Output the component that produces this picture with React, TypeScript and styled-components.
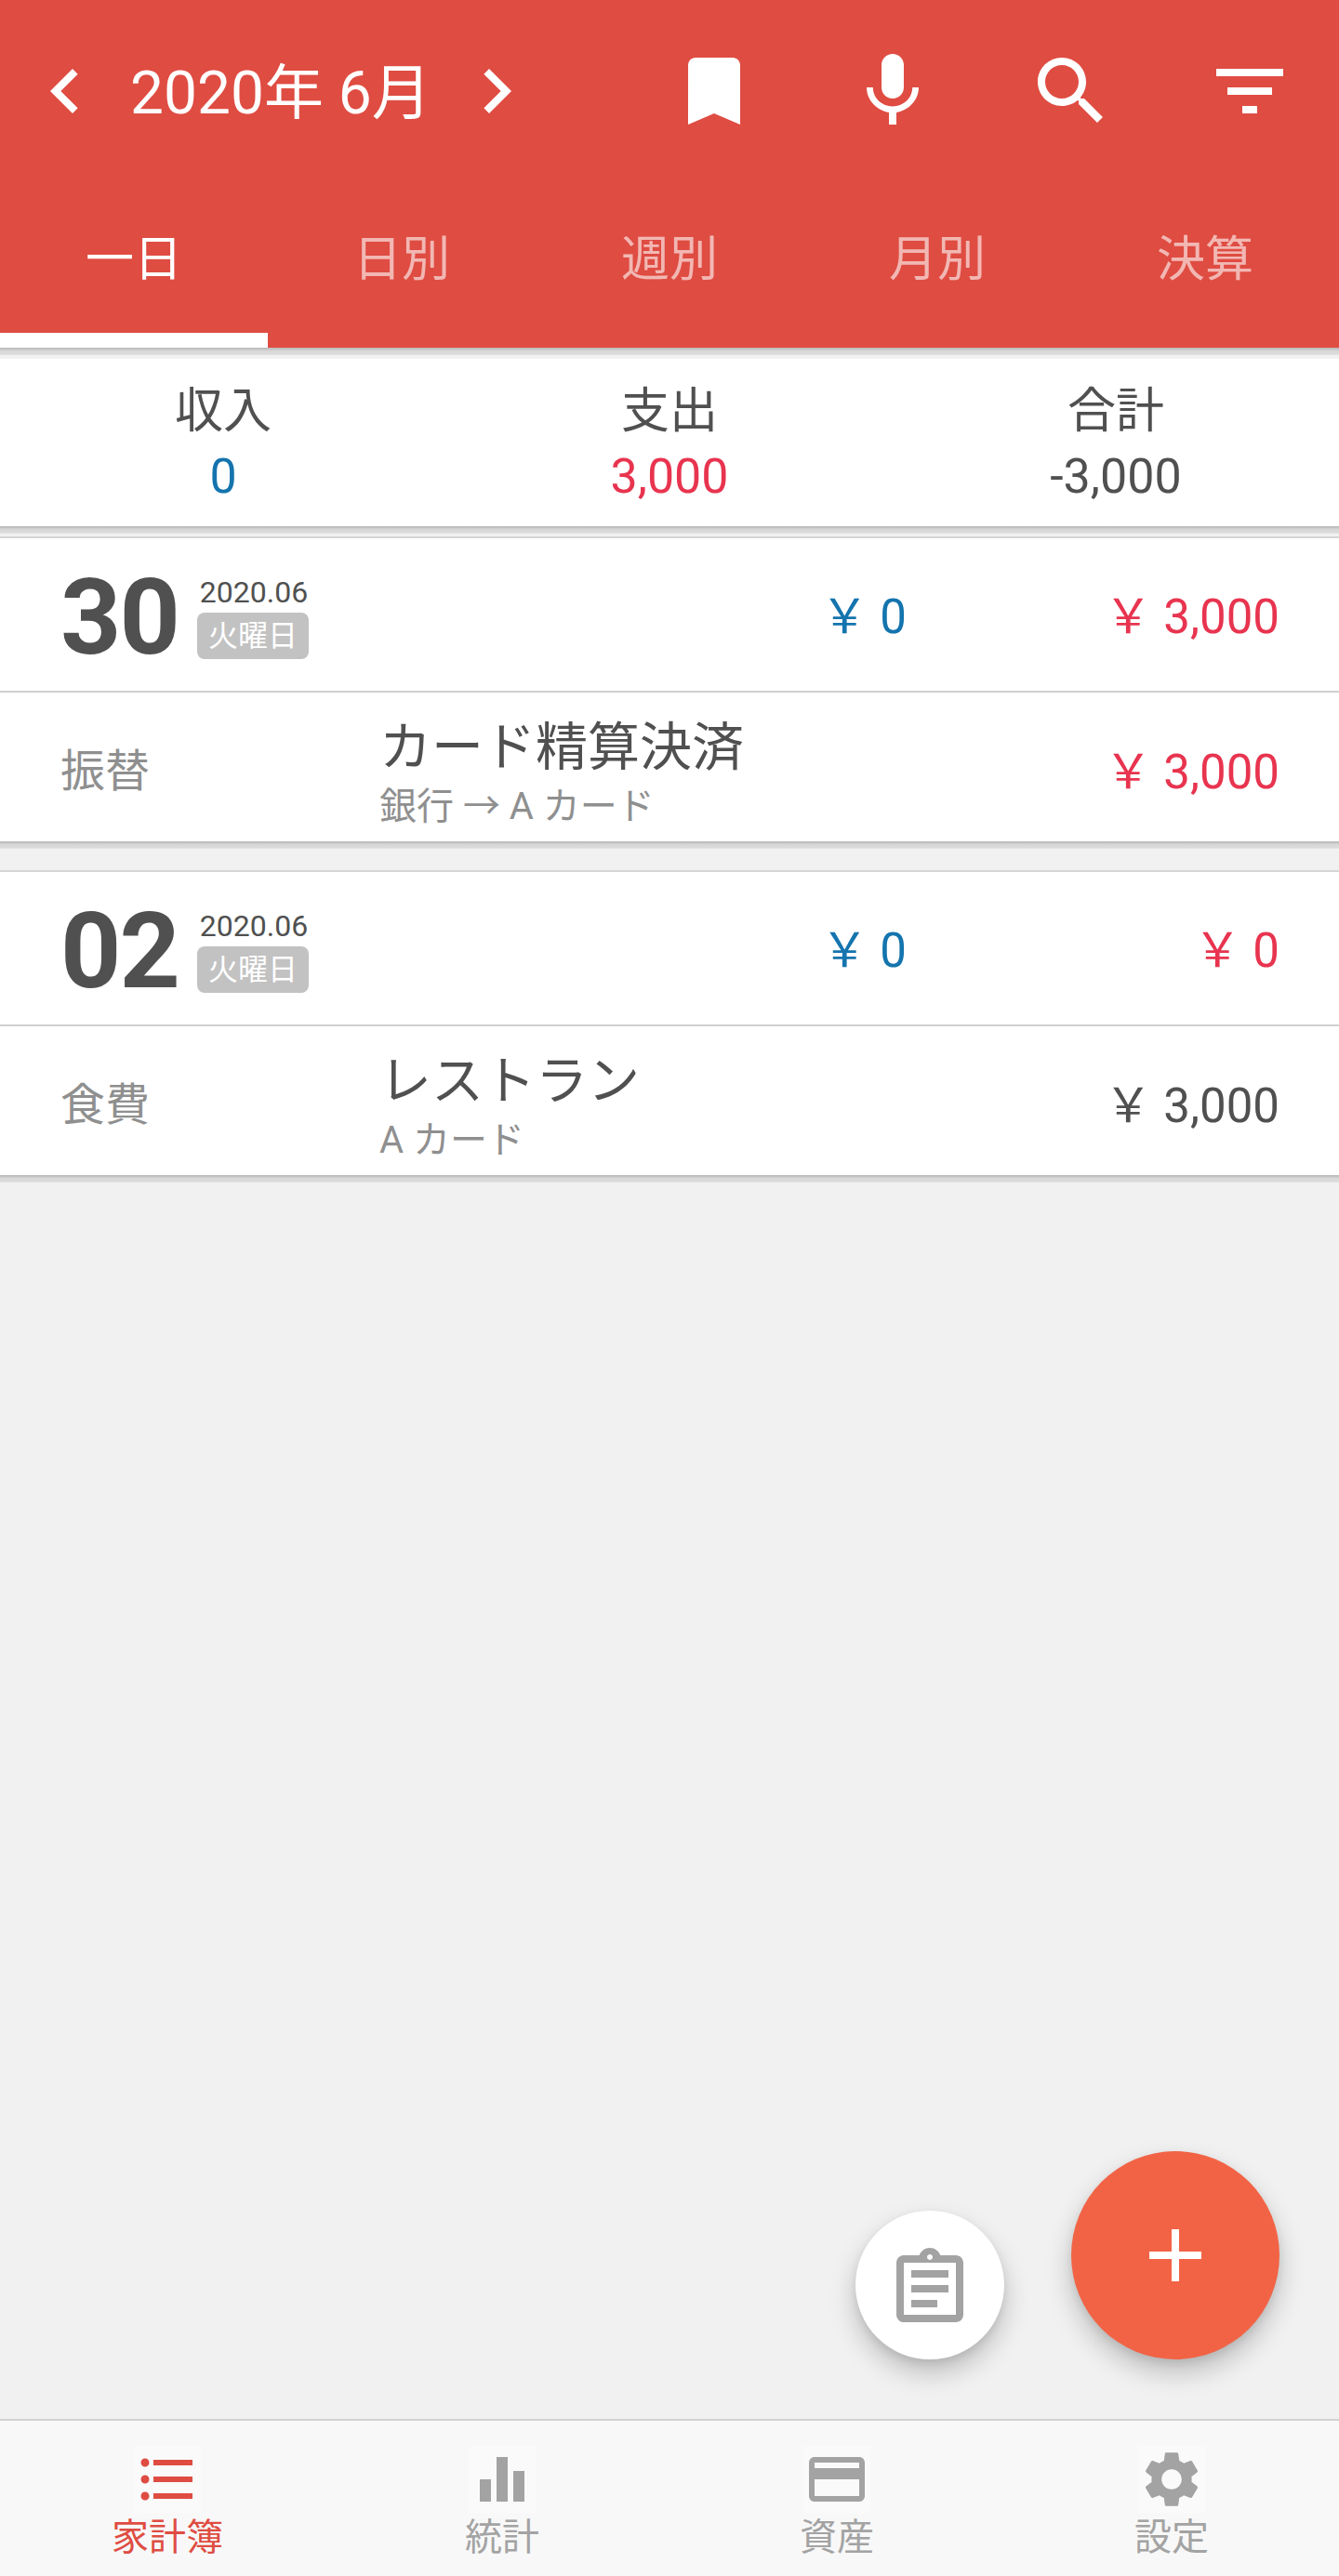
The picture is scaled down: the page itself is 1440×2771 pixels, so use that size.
import React from "react";
import styled, { createGlobalStyle } from "styled-components";

const FONT = `Roboto, "Noto Sans CJK JP", sans-serif`;
const RED = "#df4c42";
const BLUE = "#1474ae";
const PINK = "#e8344f";
const DARK = "#505050";
const MUTED = "#8f8f8f";
const GREY = "#a3a3a3";
const BG = "#f1f1f1";

const Global = createGlobalStyle`
  html, body { margin: 0; padding: 0; background: ${BG}; }
  * { box-sizing: border-box; }
`;

const Page = styled.div`
  width: 1440px;
  height: 2771px;
  position: relative;
  display: flex;
  flex-direction: column;
  font-family: ${FONT};
  background: ${BG};
  color: ${DARK};
  overflow: hidden;
`;

const Header = styled.header`
  background: ${RED};
  height: 374px;
  display: flex;
  flex-direction: column;
  color: #fff;
`;

const Toolbar = styled.div`
  height: 196px;
  padding: 50px 48px 0 22px;
  display: flex;
  align-items: flex-start;
`;

const MonthTitle = styled.div`
  width: 368px;
  height: 96px;
  padding: 3px 0 0 22px;
  font-size: 64px;
  line-height: 96px;
  white-space: nowrap;
`;

const Actions = styled.div`
  margin-left: auto;
  display: flex;
`;

const Icon = styled.svg<{ $size?: number; $fill?: string }>`
  display: block;
  width: ${(p) => p.$size ?? 96}px;
  height: ${(p) => p.$size ?? 96}px;
  fill: ${(p) => p.$fill ?? "currentColor"};
  flex: none;
`;

const ActionButton = styled.div`
  width: 96px;
  height: 96px;
  & + & { margin-left: 96px; }
`;

const Tabs = styled.nav`
  flex: 1;
  display: grid;
  grid-template-columns: repeat(5, 288px);
`;

const TabItem = styled.div<{ $active?: boolean }>`
  display: flex;
  align-items: center;
  justify-content: center;
  padding-bottom: 5px;
  font-size: 52px;
  color: ${(p) => (p.$active ? "#fff" : "rgba(255,255,255,0.6)")};
  border-bottom: 16px solid ${(p) => (p.$active ? "#fff" : "transparent")};
`;

const Shade = styled.div<{ $height: number }>`
  height: ${(p) => p.$height}px;
  background: linear-gradient(#b9b9b9 0, #c6c6c6 2px, #d6d6d6 3px, #dcdcdc 7px, #e6e6e6 8px, ${BG} 8px);
`;

const Summary = styled.section`
  height: 180px;
  background: #fff;
  display: grid;
  grid-template-columns: repeat(3, 480px);
`;

const SummaryCell = styled.div`
  display: flex;
  flex-direction: column;
  align-items: center;
  padding-top: 26px;
`;

const SummaryLabel = styled.div`
  font-size: 52px;
  line-height: 62px;
`;

const SummaryValue = styled.div<{ $color: string }>`
  font-size: 52px;
  line-height: 60px;
  margin-top: 9px;
  color: ${(p) => p.$color};
`;

const Card = styled.article<{ $gap: number }>`
  margin-top: ${(p) => p.$gap}px;
  background: #fff;
  border-top: 2px solid #d6d6d6;
`;

const DayRow = styled.div`
  height: 166px;
  padding: 5px 64px 0 65px;
  display: flex;
  align-items: center;
  border-bottom: 2px solid #d0d0d0;
`;

const DayNumber = styled.div`
  font-size: 114px;
  font-weight: 700;
  line-height: 1;
  width: 147px;
  letter-spacing: -2px;
`;

const DayMeta = styled.div`
  width: 120px;
  display: flex;
  flex-direction: column;
  align-items: center;
`;

const DayDate = styled.div`
  font-size: 32px;
  line-height: 36px;
  white-space: nowrap;
  margin-left: 2px;
`;

const Weekday = styled.div`
  width: 120px;
  height: 50px;
  margin-top: 4px;
  border-radius: 8px;
  background: #c2c2c2;
  color: #fff;
  font-size: 32px;
  line-height: 50px;
  text-align: center;
`;

const Money = styled.div<{ $color: string; $width?: number }>`
  font-size: 51px;
  line-height: 60px;
  text-align: right;
  white-space: nowrap;
  color: ${(p) => p.$color};
  ${(p) => (p.$width ? `width: ${p.$width}px;` : "")}
`;

const DayTotals = styled.div`
  margin-left: auto;
  display: flex;
`;

const EntryRow = styled.div`
  height: 160px;
  padding: 0 64px 0 65px;
  display: flex;
  align-items: center;
`;

const Category = styled.div`
  width: 343px;
  font-size: 48px;
  color: ${MUTED};
`;

const EntryBody = styled.div`
  padding-top: 12px;
  display: flex;
  flex-direction: column;
`;

const EntryTitle = styled.div`
  font-size: 56px;
  line-height: 66px;
  white-space: nowrap;
`;

const EntrySub = styled.div`
  margin-top: 7px;
  font-size: 40px;
  line-height: 48px;
  color: ${MUTED};
  white-space: nowrap;
`;

const EntryAmount = styled.div`
  margin-left: auto;
  padding-top: 12px;
`;

const Spacer = styled.div`
  flex: 1;
`;

const BottomBar = styled.nav`
  height: 169px;
  background: #f8f8f8;
  border-top: 2px solid #d2d2d2;
  display: grid;
  grid-template-columns: repeat(4, 360px);
`;

const BarItem = styled.div<{ $active?: boolean }>`
  padding-top: 27px;
  display: flex;
  flex-direction: column;
  align-items: center;
  color: ${(p) => (p.$active ? RED : GREY)};
`;

const BarIconBox = styled.div`
  width: 72px;
  height: 72px;
  background: #fafafa;
`;

const BarLabel = styled.div`
  font-size: 40px;
  line-height: 50px;
  margin-top: 2px;
`;

const Fab = styled.div<{ $size: number; $bg: string; $right: number }>`
  position: absolute;
  right: ${(p) => p.$right}px;
  bottom: 233px;
  width: ${(p) => p.$size}px;
  height: ${(p) => p.$size}px;
  border-radius: 50%;
  background: ${(p) => p.$bg};
  box-shadow: 0 14px 28px rgba(0, 0, 0, 0.22), 0 4px 10px rgba(0, 0, 0, 0.08);
  display: flex;
  align-items: center;
  justify-content: center;
`;

const ClipboardWrap = styled.div`
  margin-top: 8px;
  color: ${GREY};
`;

const P = {
  left: "M15.41 7.41L14 6l-6 6 6 6 1.41-1.41L10.83 12z",
  right: "M10 6L8.59 7.41 13.17 12l-4.58 4.58L10 18l6-6z",
  bookmark: "M17 3H7c-1.1 0-1.99.9-1.99 2L5 21l7-3 7 3V5c0-1.1-.9-2-2-2z",
  mic: "M12 14c1.66 0 2.99-1.34 2.99-3L15 5c0-1.66-1.34-3-3-3S9 3.34 9 5v6c0 1.66 1.34 3 3 3zm5.3-3c0 3-2.54 5.1-5.3 5.1S6.7 14 6.7 11H5c0 3.41 2.72 6.23 6 6.72V21h2v-3.28c3.28-.48 6-3.3 6-6.72h-1.7z",
  search:
    "M15.5 14h-.79l-.28-.27C15.41 12.59 16 11.11 16 9.5 16 5.91 13.09 3 9.5 3S3 5.91 3 9.5 5.91 16 9.5 16c1.61 0 3.09-.59 4.23-1.57l.27.28v.79l5 4.99L20.49 19l-4.99-5zm-6 0C7.01 14 5 11.99 5 9.5S7.01 5 9.5 5 14 7.01 14 9.5 11.99 14 9.5 14z",
  filter: "M10 18h4v-2h-4v2zM3 6v2h18V6H3zm3 7h12v-2H6v2z",
  list: "M4 10.5c-.83 0-1.5.67-1.5 1.5s.67 1.5 1.5 1.5 1.5-.67 1.5-1.5-.67-1.5-1.5-1.5zm0-6c-.83 0-1.5.67-1.5 1.5S3.17 7.5 4 7.5 5.5 6.83 5.5 6 4.83 4.5 4 4.5zm0 12c-.83 0-1.5.68-1.5 1.5s.68 1.5 1.5 1.5 1.5-.68 1.5-1.5-.67-1.5-1.5-1.5zM7 19h14v-2H7v2zm0-6h14v-2H7v2zm0-8v2h14V5H7z",
  bars: "M4 12h4v8H4zM10 4h4v16h-4zM16 9h4v11h-4z",
  card: "M20 4H4c-1.11 0-1.99.89-1.99 2L2 18c0 1.11.89 2 2 2h16c1.11 0 2-.89 2-2V6c0-1.11-.89-2-2-2zm0 14H4v-6h16v6zm0-10H4V6h16v2z",
  gear: "M19.14 12.94c.04-.3.06-.61.06-.94 0-.32-.02-.64-.07-.94l2.03-1.58c.18-.14.23-.41.12-.61l-1.92-3.32c-.12-.22-.37-.29-.59-.22l-2.39.96c-.5-.38-1.03-.7-1.62-.94l-.36-2.54c-.04-.24-.24-.41-.48-.41h-3.84c-.24 0-.43.17-.47.41l-.36 2.54c-.59.24-1.13.57-1.62.94l-2.39-.96c-.22-.08-.47 0-.59.22L2.74 8.87c-.12.21-.08.47.12.61l2.03 1.58c-.05.3-.09.63-.09.94s.02.64.07.94l-2.03 1.58c-.18.14-.23.41-.12.61l1.92 3.32c.12.22.37.29.59.22l2.39-.96c.5.38 1.03.7 1.62.94l.36 2.54c.05.24.24.41.48.41h3.84c.24 0 .44-.17.47-.41l.36-2.54c.59-.24 1.13-.56 1.62-.94l2.39.96c.22.08.47 0 .59-.22l1.92-3.32c.12-.22.07-.47-.12-.61l-2.01-1.58zM12 15.6c-1.98 0-3.6-1.62-3.6-3.6s1.62-3.6 3.6-3.6 3.6 1.62 3.6 3.6-1.62 3.6-3.6 3.6z",
  clipboard:
    "M7 15h7v2H7zm0-4h10v2H7zm0-4h10v2H7zm12-4h-4.18C14.4 1.84 13.3 1 12 1c-1.3 0-2.4.84-2.82 2H5c-.14 0-.27.01-.4.04-.39.08-.74.28-1.01.55-.18.18-.33.4-.43.64-.1.23-.16.49-.16.77v14c0 .27.06.54.16.78s.25.45.43.64c.27.27.62.47 1.01.55.13.02.26.03.4.03h14c1.1 0 2-.9 2-2V5c0-1.1-.9-2-2-2zm-7-.25c.41 0 .75.34.75.75s-.34.75-.75.75-.75-.34-.75-.75.34-.75.75-.75zM19 19H5V5h14v14z",
  plus: "M19 13h-6v6h-2v-6H5v-2h6V5h2v6h6v2z",
};

const Glyph = ({ d, size }: { d: string; size?: number }) => (
  <Icon viewBox="0 0 24 24" $size={size}>
    <path d={d} />
  </Icon>
);

const tabs = ["一日", "日別", "週別", "月別", "決算"];
const actions = [P.bookmark, P.mic, P.search, P.filter];
const summary = [
  { label: "収入", value: "0", color: BLUE },
  { label: "支出", value: "3,000", color: PINK },
  { label: "合計", value: "-3,000", color: DARK },
];
const days = [
  {
    gap: 1,
    day: "30",
    income: "￥ 0",
    expense: "￥ 3,000",
    category: "振替",
    title: "カード精算決済",
    sub: "銀行 → A カード",
    amount: "￥ 3,000",
    amountColor: PINK,
    shade: 31,
  },
  {
    gap: 0,
    day: "02",
    income: "￥ 0",
    expense: "￥ 0",
    category: "食費",
    title: "レストラン",
    sub: "A カード",
    amount: "￥ 3,000",
    amountColor: DARK,
    shade: 8,
  },
];
const nav = [
  { label: "家計簿", icon: P.list, active: true },
  { label: "統計", icon: P.bars },
  { label: "資産", icon: P.card },
  { label: "設定", icon: P.gear },
];

export default function App() {
  return (
    <Page>
      <Global />
      <Header>
        <Toolbar>
          <Glyph d={P.left} />
          <MonthTitle>2020年 6月</MonthTitle>
          <Glyph d={P.right} />
          <Actions>
            {actions.map((d) => (
              <ActionButton key={d}>
                <Glyph d={d} />
              </ActionButton>
            ))}
          </Actions>
        </Toolbar>
        <Tabs>
          {tabs.map((t, i) => (
            <TabItem key={t} $active={i === 0}>
              {t}
            </TabItem>
          ))}
        </Tabs>
      </Header>
      <Shade $height={12} />
      <Summary>
        {summary.map((s) => (
          <SummaryCell key={s.label}>
            <SummaryLabel>{s.label}</SummaryLabel>
            <SummaryValue $color={s.color}>{s.value}</SummaryValue>
          </SummaryCell>
        ))}
      </Summary>
      <Shade $height={10} />
      {days.map((d) => (
        <React.Fragment key={d.day}>
          <Card $gap={d.gap}>
            <DayRow>
              <DayNumber>{d.day}</DayNumber>
              <DayMeta>
                <DayDate>2020.06</DayDate>
                <Weekday>火曜日</Weekday>
              </DayMeta>
              <DayTotals>
                <Money $color={BLUE} $width={400}>
                  {d.income}
                </Money>
                <Money $color={PINK} $width={401}>
                  {d.expense}
                </Money>
              </DayTotals>
            </DayRow>
            <EntryRow>
              <Category>{d.category}</Category>
              <EntryBody>
                <EntryTitle>{d.title}</EntryTitle>
                <EntrySub>{d.sub}</EntrySub>
              </EntryBody>
              <EntryAmount>
                <Money $color={d.amountColor}>{d.amount}</Money>
              </EntryAmount>
            </EntryRow>
          </Card>
          <Shade $height={d.shade} />
        </React.Fragment>
      ))}
      <Spacer />
      <Fab $size={160} $bg="#fff" $right={360}>
        <ClipboardWrap>
          <Glyph d={P.clipboard} />
        </ClipboardWrap>
      </Fab>
      <Fab $size={224} $bg="#f26345" $right={64}>
        <Icon viewBox="0 0 24 24" $size={96} $fill="#fff">
          <path d={P.plus} />
        </Icon>
      </Fab>
      <BottomBar>
        {nav.map((n) => (
          <BarItem key={n.label} $active={n.active}>
            <BarIconBox>
              <Glyph d={n.icon} size={72} />
            </BarIconBox>
            <BarLabel>{n.label}</BarLabel>
          </BarItem>
        ))}
      </BottomBar>
    </Page>
  );
}
